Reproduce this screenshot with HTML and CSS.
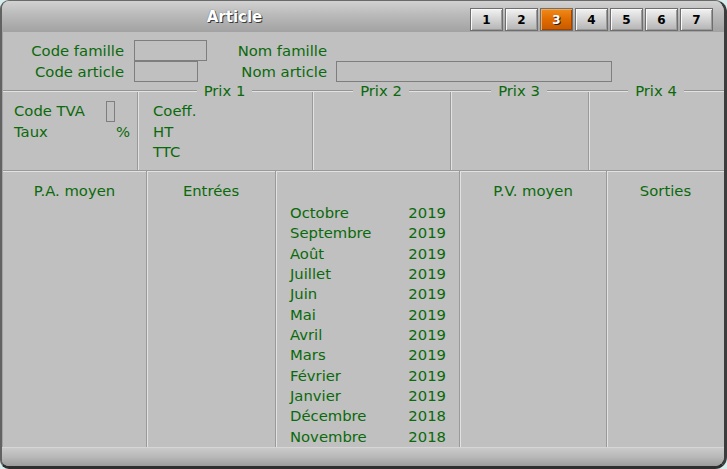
FILE: index.html
```html
<!DOCTYPE html>
<html lang="fr">
<head>
<meta charset="utf-8">
<title>Article</title>
<link rel="stylesheet" href="styles.css">
</head>
<body>
<div class="window">
  <div class="titlebar">
    <div class="title">Article</div>
    <div class="tabs">
      <span class="tab">1</span>
      <span class="tab">2</span>
      <span class="tab active">3</span>
      <span class="tab">4</span>
      <span class="tab">5</span>
      <span class="tab">6</span>
      <span class="tab">7</span>
    </div>
  </div>
  <div class="body">
    <div class="header">
      <div class="hrow">
        <span class="lbl lbl1">Code famille</span>
        <span class="box box-cf"></span>
        <span class="lbl lbl2a">Nom famille</span>
      </div>
      <div class="hrow">
        <span class="lbl lbl1">Code article</span>
        <span class="box box-ca"></span>
        <span class="lbl lbl2b">Nom article</span>
        <span class="box box-na"></span>
      </div>
    </div>
    <div class="prix">
      <div class="pcol pc0">
        <div class="legend"></div>
        <div class="pbody">
          <div class="prow"><span>Code TVA</span><span class="box box-tva"></span></div>
          <div class="prow"><span>Taux</span><span class="pct">%</span></div>
        </div>
      </div>
      <div class="pcol pc1">
        <div class="legend"><span>Prix 1</span></div>
        <div class="pbody sep">
          <div class="prow">Coeff.</div>
          <div class="prow">HT</div>
          <div class="prow">TTC</div>
        </div>
      </div>
      <div class="pcol pc2">
        <div class="legend"><span>Prix 2</span></div>
        <div class="pbody sep"></div>
      </div>
      <div class="pcol pc3">
        <div class="legend"><span>Prix 3</span></div>
        <div class="pbody sep"></div>
      </div>
      <div class="pcol pc4">
        <div class="legend"><span>Prix 4</span></div>
        <div class="pbody sep"></div>
      </div>
    </div>
    <div class="stats">
      <div class="scol s0"><div class="shead">P.A. moyen</div></div>
      <div class="scol s1 sep"><div class="shead">Entrées</div></div>
      <div class="scol s2 sep">
        <div class="shead">&nbsp;</div>
        <ul class="months">
          <li><span>Octobre</span><span>2019</span></li>
          <li><span>Septembre</span><span>2019</span></li>
          <li><span>Août</span><span>2019</span></li>
          <li><span>Juillet</span><span>2019</span></li>
          <li><span>Juin</span><span>2019</span></li>
          <li><span>Mai</span><span>2019</span></li>
          <li><span>Avril</span><span>2019</span></li>
          <li><span>Mars</span><span>2019</span></li>
          <li><span>Février</span><span>2019</span></li>
          <li><span>Janvier</span><span>2019</span></li>
          <li><span>Décembre</span><span>2018</span></li>
          <li><span>Novembre</span><span>2018</span></li>
        </ul>
      </div>
      <div class="scol s3 sep"><div class="shead">P.V. moyen</div></div>
      <div class="scol s4 sep"><div class="shead">Sorties</div></div>
    </div>
  </div>
  <div class="statusbar"></div>
</div>
</body>
</html>
```

FILE: styles.css
```css
* { box-sizing: border-box; }
html, body { margin: 0; padding: 0; }
body {
  background: #d6eeee;
  font-family: "DejaVu Sans", Verdana, sans-serif;
  font-size: 14.8px;
  color: #0a690a;
}
.window {
  width: 727px;
  height: 469px;
  display: flex;
  flex-direction: column;
  background: #c0c0c0;
  border-style: solid;
  border-color: #6a6a6a #3c3c3c #2e2e2e #626262;
  border-width: 1px 3px 3px 2px;
  border-radius: 9px 12px 12px 9px;
  overflow: hidden;
}
.titlebar {
  height: 31px;
  flex: none;
  display: flex;
  background: linear-gradient(#d2d2d2, #bcbcbc 40%, #a2a2a2);
}
.title {
  flex: 1;
  text-align: center;
  font-weight: bold;
  font-size: 15px;
  color: #fff;
  line-height: 33px;
  padding-right: 3px;
  text-shadow: 1px 1px 0 #3a3a3a, 0 0 1px #555;
}
.tabs {
  display: flex;
  gap: 2px;
  padding: 7px 11px 0 0;
}
.tab {
  width: 33px;
  height: 23px;
  display: flex;
  align-items: center;
  justify-content: center;
  font-weight: bold;
  font-size: 12px;
  color: #000;
  border: 1px solid #6e6e6e;
  background: linear-gradient(#f2f2f2, #d6d6d6 45%, #b4b4b4);
  box-shadow: inset 1px 1px 0 #fafafa, inset -1px -1px 0 #9a9a9a;
}
.tab.active {
  background: linear-gradient(#f08a1c, #e06c00 50%, #c65800);
  color: #fff;
  text-shadow: 1px 1px 0 #222;
  box-shadow: inset 1px 1px 0 #f6a850, inset -1px -1px 0 #a04400;
}
.body {
  flex: 1;
  display: flex;
  flex-direction: column;
  border-left: 1px solid #a4a4a4;
}
.header {
  padding-top: 8px;
  height: 58px;
  flex: none;
}
.hrow {
  display: flex;
  align-items: center;
  height: 21px;
}
.lbl { text-align: right; line-height: 21px; }
.lbl1 { width: 121px; margin-right: 10px; }
.lbl2a { width: 120px; }
.lbl2b { width: 129px; margin-right: 9px; }
.box {
  display: block;
  height: 21px;
  border: 1px solid #7e7e7e;
  background: #c0c0c0;
}
.box-cf { width: 73px; }
.box-ca { width: 64px; }
.box-na { width: 276px; }
.prix {
  display: flex;
  height: 81px;
  flex: none;
}
.pcol { display: flex; flex-direction: column; }
.pc0 { width: 134px; }
.pc1 { width: 175px; }
.pc2 { width: 138px; }
.pc3 { width: 138px; }
.pc4 { flex: 1; }
.legend {
  flex: none;
  display: flex;
  align-items: center;
  justify-content: center;
  border-top: 1px solid #969696;
  border-bottom: 1px solid #e2e2e2;
  box-sizing: content-box;
  height: 0;
}
.legend span {
  background: #c0c0c0;
  padding: 0 7px;
  line-height: 16px;
  white-space: nowrap;
}
.pbody {
  flex: 1;
  padding-top: 9px;
}
.sep {
  border-left: 1px solid #9a9a9a;
  box-shadow: inset 1px 0 0 #e2e2e2;
}
.pc0 .pbody { padding-left: 11px; padding-right: 7px; }
.pc1 .pbody { padding-left: 15px; }
.prow {
  height: 20.5px;
  line-height: 20.5px;
  display: flex;
  align-items: center;
  justify-content: space-between;
}
.pc1 .prow { justify-content: flex-start; }
.box-tva { width: 9px; height: 21px; margin-right: 15px; }
.stats {
  flex: 1;
  display: flex;
  border-top: 1px solid #9a9a9a;
  box-shadow: inset 0 1px 0 #e2e2e2;
  margin-top: -1px;
}
.scol { padding-top: 10px; }
.s0 { width: 143px; }
.s1 { width: 129px; }
.s2 { width: 184px; }
.s3 { width: 147px; }
.s4 { flex: 1; }
.shead {
  text-align: center;
  line-height: 20px;
  height: 20px;
}
.months {
  list-style: none;
  margin: 2px 0 0;
  padding: 0 13px 0 14px;
}
.months li {
  display: flex;
  justify-content: space-between;
  height: 20.35px;
  line-height: 20.35px;
}
.statusbar {
  height: 19px;
  flex: none;
  border-top: 1px solid #d6d6d6;
  background: linear-gradient(#cacaca, #b8b8b8 50%, #9c9c9c);
}
```
